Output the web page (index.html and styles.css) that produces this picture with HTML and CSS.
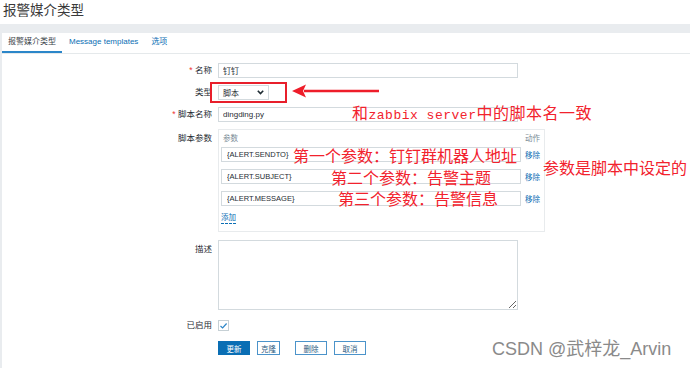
FILE: index.html
```html
<!DOCTYPE html>
<html lang="zh-CN">
<head>
  <meta charset="UTF-8">
  <title>报警媒介类型</title>
  <link rel="stylesheet" href="styles.css">
</head>
<body>
  <div class="page">
    <header class="top">
      <h1>报警媒介类型</h1>
    </header>
    <div class="band"></div>

    <main class="panel">
      <nav class="tabs">
        <a class="tab active">报警媒介类型</a>
        <a class="tab">Message templates</a>
        <a class="tab">选项</a>
      </nav>

      <form class="form">
        <div class="row">
          <label class="lbl"><span class="req">*</span> 名称</label>
          <input class="field" type="text" value="钉钉">
        </div>
        <div class="row">
          <label class="lbl">类型</label>
          <div class="select">
            <span>脚本</span>
            <svg width="7" height="5" viewBox="0 0 7 5"><polyline points="0.8,0.8 3.5,3.6 6.2,0.8" fill="none" stroke="#1f2c33" stroke-width="1.6"/></svg>
          </div>
        </div>
        <div class="row">
          <label class="lbl"><span class="req">*</span> 脚本名称</label>
          <input class="field" type="text" value="dingding.py">
        </div>
        <div class="row row-params">
          <label class="lbl lbl-top">脚本参数</label>
          <div class="params">
            <div class="params-head">
              <span class="col-param">参数</span>
              <span>动作</span>
            </div>
            <div class="param">
              <input class="param-input" type="text" value="{ALERT.SENDTO}">
              <a class="link">移除</a>
            </div>
            <div class="param">
              <input class="param-input" type="text" value="{ALERT.SUBJECT}">
              <a class="link">移除</a>
            </div>
            <div class="param">
              <input class="param-input" type="text" value="{ALERT.MESSAGE}">
              <a class="link">移除</a>
            </div>
            <a class="link add">添加</a>
          </div>
        </div>
        <div class="row row-desc">
          <label class="lbl lbl-top">描述</label>
          <textarea class="desc"></textarea>
        </div>
        <div class="row row-check">
          <label class="lbl">已启用</label>
          <span class="check">
            <svg width="9" height="8" viewBox="0 0 9 8"><polyline points="1.5,4 3.6,6 7.6,1.5" fill="none" stroke="#2d86c8" stroke-width="1.2"/></svg>
          </span>
        </div>
        <div class="row row-buttons">
          <span></span>
          <div class="buttons">
            <button type="button" class="btn btn-main">更新</button>
            <button type="button" class="btn btn-clone">克隆</button>
            <button type="button" class="btn">删除</button>
            <button type="button" class="btn">取消</button>
          </div>
        </div>
      </form>
    </main>

    <!-- red annotations drawn over the screenshot -->
    <div class="mark-box"></div>
    <svg class="mark-arrow" width="92" height="16" viewBox="0 0 92 16">
      <line x1="14" y1="8" x2="89" y2="8" stroke="#ee1d2a" stroke-width="2.6"/>
      <polygon points="2,8 16,1.5 13,8 16,14.5" fill="#ee1d2a"/>
    </svg>
    <div class="note note-name">和<span class="mono">zabbix server</span>中的脚本名一致</div>
    <div class="note note-p1">第一个参数：钉钉群机器人地址</div>
    <div class="note note-p2">第二个参数：告警主题</div>
    <div class="note note-p3">第三个参数：告警信息</div>
    <div class="note note-side">参数是脚本中设定的</div>

    <div class="watermark">CSDN @武梓龙_Arvin</div>
  </div>
</body>
</html>
```

FILE: styles.css
```css
body {
  margin: 0;
  background: #e9ecef;
  font-family: "Liberation Sans", Arial, "Noto Sans CJK SC", sans-serif;
  color: #1f2c33;
}

.page {
  position: relative;
  width: 690px;
  height: 368px;
  overflow: hidden;
}

.top {
  height: 24px;
  background: #fff;
}

.top h1 {
  margin: 0;
  padding-left: 3px;
  font-size: 13.5px;
  font-weight: normal;
  line-height: 22px;
  color: #3a3a3a;
}

.band {
  height: 9px;
}

.panel {
  margin-left: 2px;
  background: #fff;
  padding-bottom: 10px;
}

.tabs {
  display: flex;
  height: 20px;
  border-bottom: 1px solid #e5e9eb;
}

.tab {
  padding: 0 6px;
  margin-right: 1px;
  font-size: 8px;
  line-height: 18px;
  color: #0a6eb4;
  border-bottom: 2px solid transparent;
}

.tab.active {
  color: #3a4449;
  border-bottom-color: #2b86c9;
}

.form {
  padding-top: 9px;
}

.row {
  display: grid;
  grid-template-columns: 210px auto;
  column-gap: 6px;
  align-items: start;
  justify-content: start;
  margin-bottom: 7px;
}

.lbl {
  text-align: right;
  font-size: 8.5px;
  line-height: 15px;
}

.lbl-top {
  padding-top: 2px;
}

.req {
  color: #e33;
}

.field {
  box-sizing: border-box;
  width: 300px;
  height: 15px;
  margin: 0;
  padding: 0 4px;
  border: 1px solid #d3dade;
  font-family: inherit;
  font-size: 8px;
  color: #1f2c33;
}

.select {
  box-sizing: border-box;
  width: 51px;
  height: 15px;
  padding: 0 4px;
  border: 1px solid #d3dade;
  display: flex;
  align-items: center;
  justify-content: space-between;
  font-size: 8px;
}

.row-params {
  margin-bottom: 8px;
}

.params {
  box-sizing: border-box;
  width: 327px;
  border: 1px solid #e8ebed;
  padding: 2px 3px 5px 2px;
}

.params-head {
  display: flex;
  font-size: 7.5px;
  line-height: 14px;
  color: #7a8c96;
}

.col-param {
  width: 302px;
  padding-left: 2px;
}

.param {
  display: flex;
  align-items: center;
  gap: 4px;
  margin-top: 7px;
}

.param:nth-child(2) {
  margin-top: 1px;
}

.param-input {
  box-sizing: border-box;
  width: 300px;
  height: 15px;
  margin: 0;
  padding: 0 5px;
  border: 1px solid #d3dade;
  font-family: inherit;
  font-size: 7.5px;
  color: #1f2c33;
}

.link {
  font-size: 7.5px;
  color: #0a6eb4;
}

.add {
  display: inline-block;
  margin-top: 4px;
  line-height: 15px;
  border-bottom: 1px dashed #0a6eb4;
  line-height: 11px;
  margin-bottom: 2px;
}

.row-desc {
  margin-bottom: 10px;
}

.desc {
  box-sizing: border-box;
  width: 300px;
  height: 70px;
  margin: 0;
  border: 1px solid #d3dade;
  display: block;
}

.row-check {
  margin-bottom: 10px;
}

.row-check .lbl {
  line-height: 11px;
}

.check {
  box-sizing: border-box;
  width: 11px;
  height: 11px;
  border: 1px solid #c6d0d5;
  display: flex;
  align-items: center;
  justify-content: center;
}

.buttons {
  display: flex;
  gap: 7px;
}

.btn {
  box-sizing: border-box;
  width: 32px;
  height: 14px;
  padding: 0;
  border: 1px solid #4b93ca;
  background: #fff;
  font-family: inherit;
  font-size: 7.5px;
  color: #2b5c82;
}

.btn-main {
  background: #0a6eb4;
  border-color: #0a6eb4;
  color: #fff;
}

.btn-clone {
  width: 23px;
  margin-right: 8px;
}

/* annotations */
.mark-box {
  position: absolute;
  left: 210px;
  top: 82px;
  width: 77px;
  height: 21px;
  box-sizing: border-box;
  border: 2px solid #e81f2b;
}

.mark-arrow {
  position: absolute;
  left: 290px;
  top: 83px;
}

.note {
  position: absolute;
  font-family: "Noto Sans CJK SC", sans-serif;
  font-size: 16px;
  line-height: 16px;
  color: #f2222d;
  white-space: nowrap;
}

.mono {
  font-family: "Liberation Mono", monospace;
  font-size: 13px;
}

.note-name {
  left: 352px;
  top: 104px;
  letter-spacing: 0.5px;
}

.note-p1 {
  left: 293px;
  top: 147px;
}

.note-p2 {
  left: 331px;
  top: 169px;
}

.note-p3 {
  left: 338px;
  top: 190px;
}

.note-side {
  left: 543px;
  top: 159px;
}

.watermark {
  position: absolute;
  left: 492px;
  top: 339px;
  font-size: 18px;
  line-height: 20px;
  color: #8a8a8a;
  white-space: nowrap;
}
```
